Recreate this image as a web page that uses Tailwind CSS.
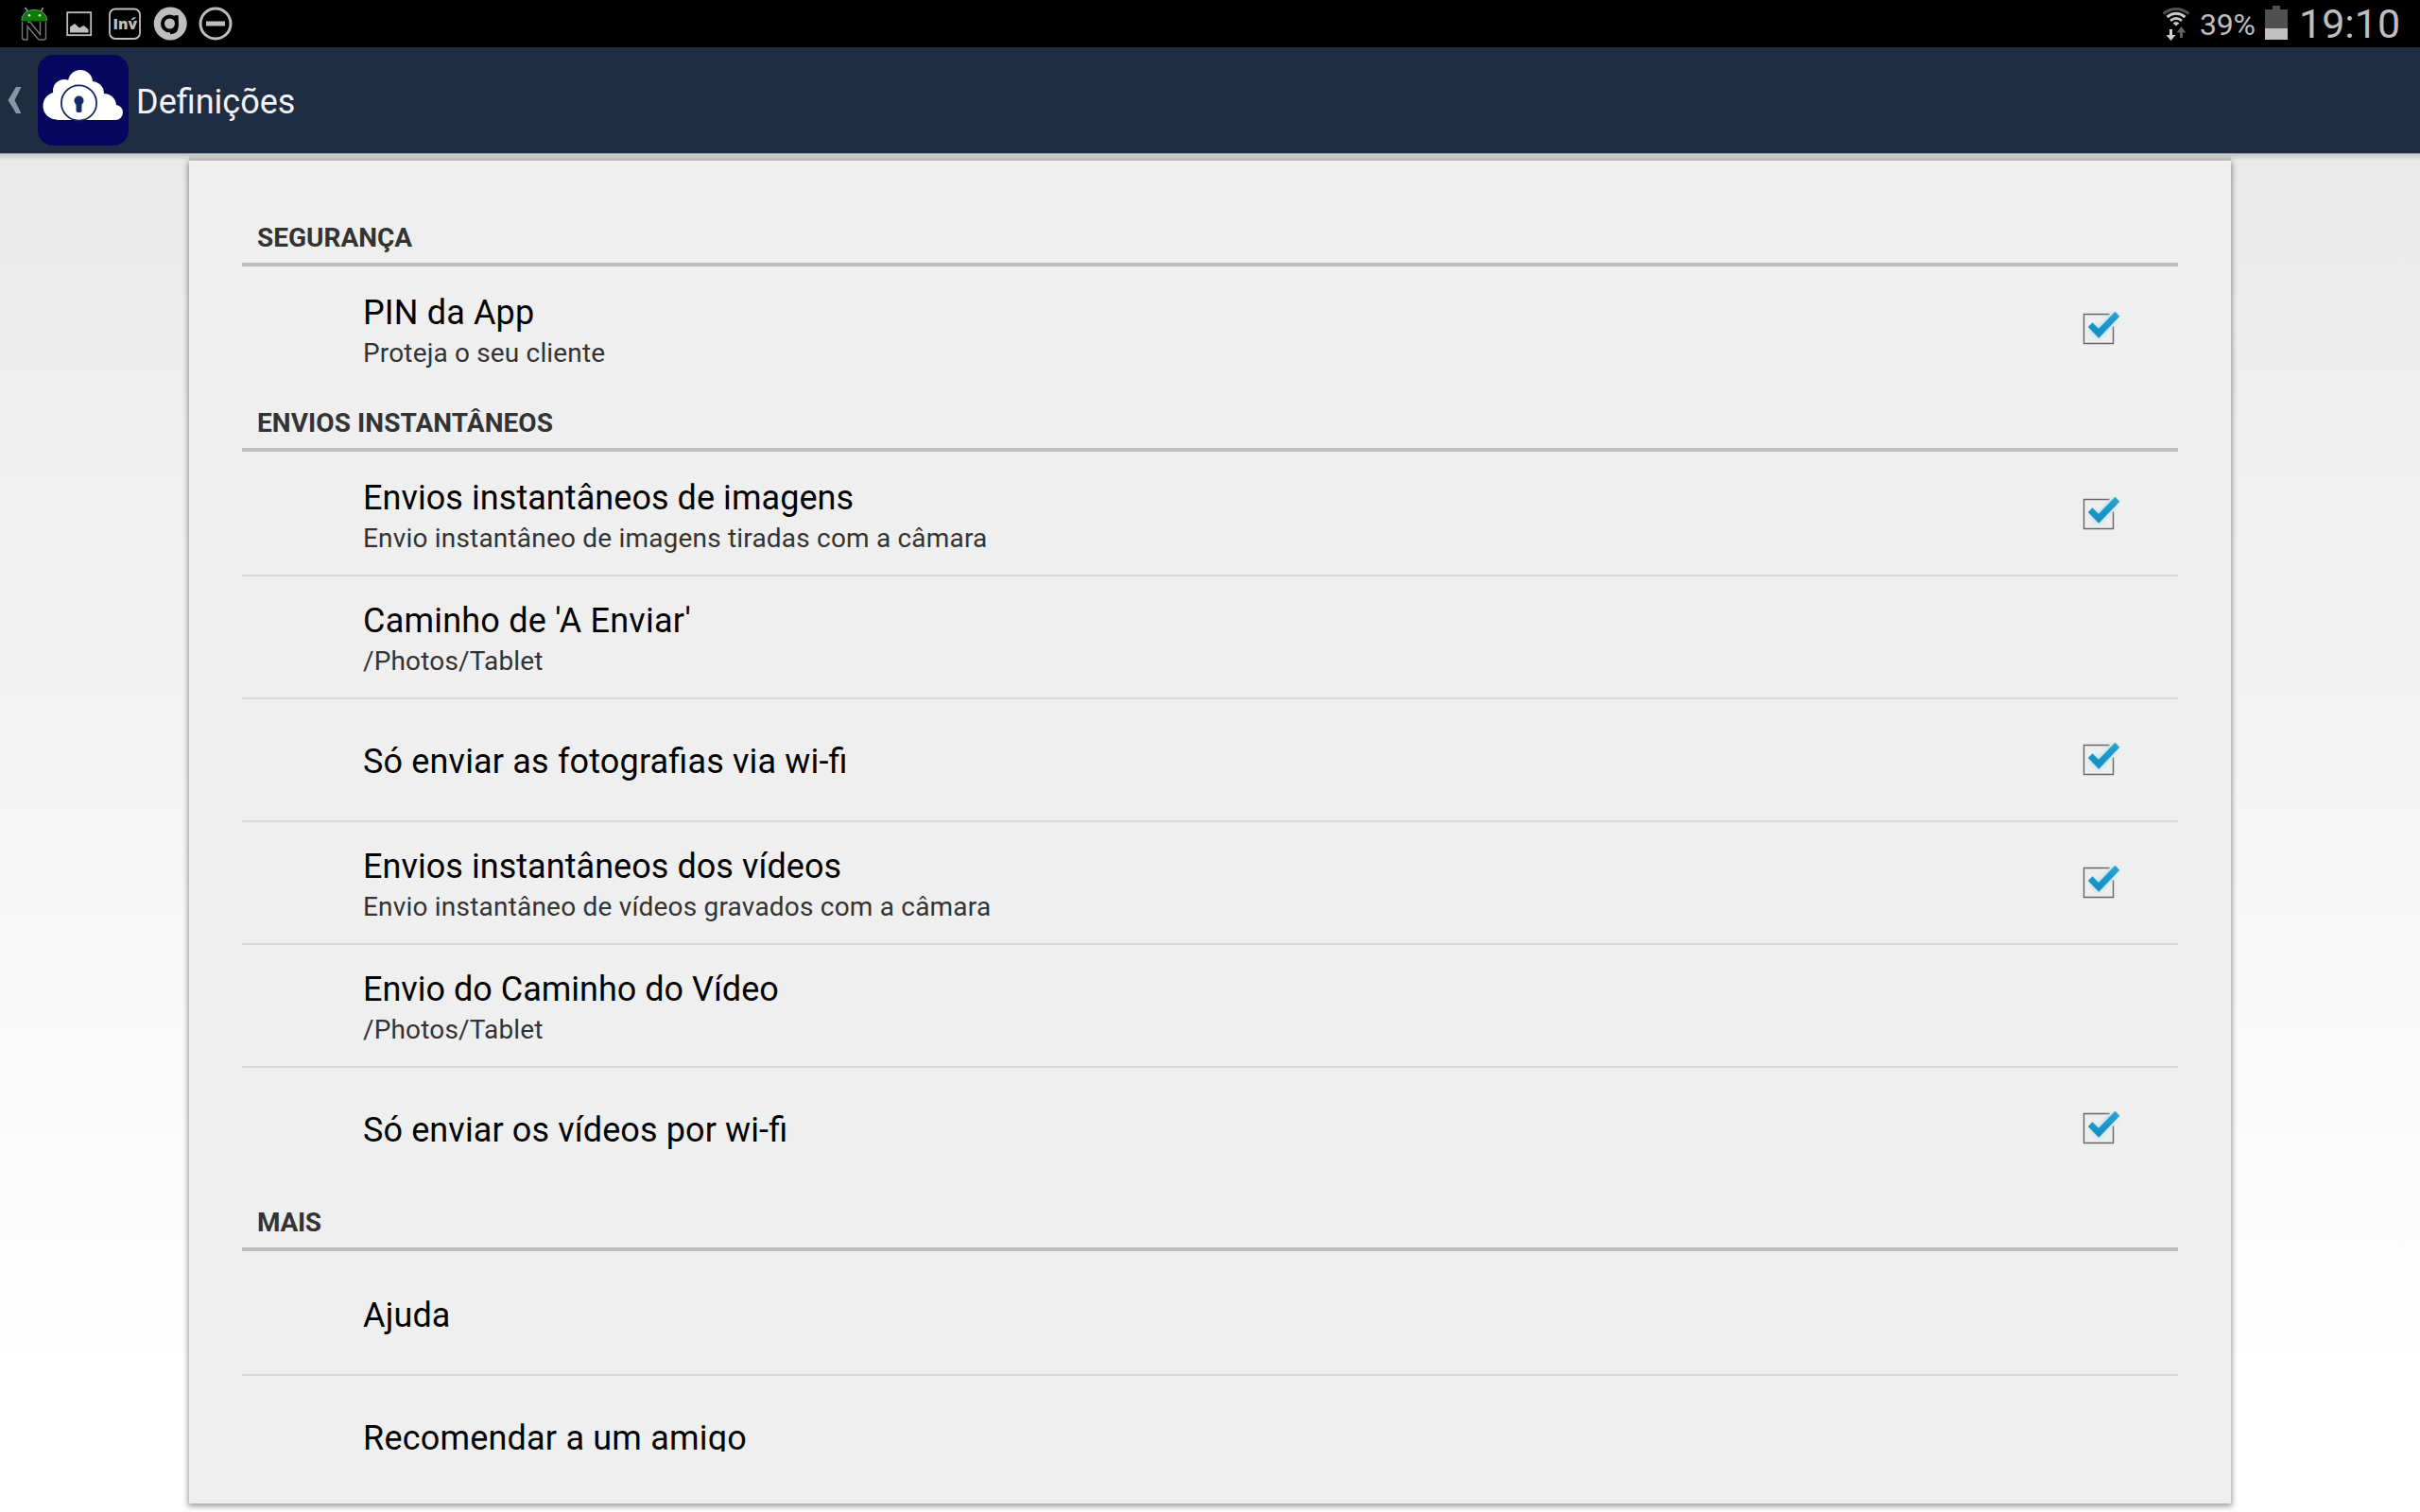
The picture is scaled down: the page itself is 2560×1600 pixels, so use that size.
<!DOCTYPE html>
<html lang="pt">
<head>
<meta charset="utf-8">
<title>Definições</title>
<script src="https://cdn.jsdelivr.net/npm/@tailwindcss/browser@4"></script>
</head>
<body class="h-[1600px] w-[2560px] overflow-hidden bg-white font-['Roboto',sans-serif] flex flex-col">
<svg width="0" height="0" class="absolute">
  <defs>
    <linearGradient id="tick" x1="0" y1="0" x2="0" y2="1"><stop offset="0" stop-color="#2aa3d3"/><stop offset="1" stop-color="#0f8cc4"/></linearGradient>
    <filter id="glow" x="-40%" y="-40%" width="180%" height="180%"><feGaussianBlur stdDeviation="2.4"/></filter>
    <symbol id="check" viewBox="0 0 56 56">
      <path d="M39.500 12.500H12.500V43.500H43.500V25.500" fill="none" stroke="#666" stroke-width="1.400"/>
      <path d="M21 26l7 7L45 14" fill="none" stroke="#a5dcf2" stroke-opacity=".75" stroke-width="9" filter="url(#glow)"/>
      <path d="M21.500 21.500L28 28L45.500 10L50 14.800L28.200 37.500L17 26Z" fill="url(#tick)" stroke="#3a9cc4" stroke-width=".6"/>
    </symbol>
  </defs>
</svg>

<!-- Status bar -->
<div class="h-[50px] shrink-0 bg-black flex items-center justify-between text-[#bebebe]">
  <svg width="260" height="50" viewBox="0 0 260 50">
    <g fill="none" stroke="#777" stroke-width="1.400"><path d="M23.500 23V39.500Q23.500 42 26 42H29V28L40.500 41.500Q41 42 42 42H46Q48.500 42 48.500 40V23M29 23.500H32L42.500 36.500V23"/></g>
    <path d="M23 22.500C23 14 29 10.500 36 10.500S49.500 14 49.500 22.500Z" fill="#0b7a0b"/>
    <path d="M29.500 12L26.500 8M43.500 12L45.500 8" stroke="#8aa88a" stroke-width="1.600" fill="none"/>
    <path d="M23 22C23 14.500 28 10.500 36 10.500S49.500 14.500 49.500 22" fill="none" stroke="#7d967d" stroke-width="1"/>
    <circle cx="31" cy="16.300" r="1.300" fill="#d8e8d8"/><circle cx="42" cy="16.300" r="1.300" fill="#d8e8d8"/>
    <rect x="71.200" y="13.200" width="25" height="24" fill="none" stroke="#bebebe" stroke-width="1.800"/>
    <path d="M74 34.500V28.500L79 25L84 29.500L88.500 27L93.500 31V34.500Z" fill="#bebebe"/>
    <rect x="116" y="9.500" width="32" height="31.500" rx="6" fill="none" stroke="#bebebe" stroke-width="1.800"/>
    <text x="119.500" y="31" font-family="Open Sans" font-weight="800" font-size="16" textLength="25.500" lengthAdjust="spacingAndGlyphs" fill="#bebebe">Inv́</text>
    <circle cx="180.200" cy="25" r="17.500" fill="#bebebe"/>
    <circle cx="179.500" cy="25" r="7.500" fill="none" stroke="#000" stroke-width="4"/>
    <path d="M184.500 18H187V25.500C187 32 186 34 180 34.500" fill="none" stroke="#000" stroke-width="3.500"/>
    <circle cx="228" cy="25" r="16" fill="none" stroke="#bebebe" stroke-width="3"/>
    <rect x="218" y="22.500" width="20" height="5" fill="#bebebe"/>
  </svg>
  <div class="flex h-[50px] items-center pr-[22px]">
    <svg width="32" height="50" viewBox="2286 0 32 50">
      <g fill="none">
        <path d="M2288.500 14.500Q2302 4.500 2315.500 14.500" stroke="#505050" stroke-width="3"/>
        <path d="M2292.500 18Q2302 10.500 2311.500 18" stroke="#c8c8c8" stroke-width="3"/>
        <path d="M2296 21.800Q2302 17 2308 21.800" stroke="#c8c8c8" stroke-width="2.800"/>
      </g>
      <path d="M2298.500 24.500Q2302 21.500 2305.500 24.500L2302 27.500Z" fill="#c8c8c8"/>
      <path d="M2295 31H2298V37H2301.500L2296.500 43L2291.500 37H2295Z" fill="#d0d0d0"/>
      <path d="M2306 40H2309V34.500H2312.500L2307.500 28L2302.500 34.500H2306Z" fill="#606060"/>
    </svg>
    <div class="ml-[9px] w-[59px] text-[32px] leading-[50px] tracking-[-0.2px] whitespace-nowrap pt-[2px]">39%</div>
    <svg class="ml-[10px]" width="24" height="50" viewBox="0 0 24 50"><path d="M8 6H16V10H24V30H0V10H8Z" fill="#505050"/><rect y="30" width="24" height="12" fill="#c0c0c0"/></svg>
    <div class="ml-[12px] w-[106px] text-[43px] leading-[50px] whitespace-nowrap">19:10</div>
  </div>
</div>

<!-- Action bar -->
<header class="relative z-10 h-[112px] shrink-0 bg-[#1f2d43] flex items-center">
  <svg width="40" height="112" viewBox="0 0 40 112" class="shrink-0"><path d="M17 42H22.500L15.500 56L22.500 70H17L8.500 56Z" fill="#8696a8"/></svg>
  <svg width="96" height="96" viewBox="0 0 96 96" class="shrink-0">
    <rect width="96" height="96" rx="16" fill="#06065e"/>
    <g fill="#fff"><circle cx="45" cy="29" r="13"/><circle cx="28" cy="38" r="12"/><circle cx="20" cy="54" r="14.500"/><circle cx="57" cy="41" r="13"/><circle cx="70" cy="54" r="13"/><circle cx="82" cy="61" r="8"/><path d="M20 40H66L82 60V69H20Z"/></g>
    <circle cx="43.500" cy="51" r="18.600" fill="#fff" stroke="#12285e" stroke-width="1.800"/>
    <circle cx="43.500" cy="48.500" r="5" fill="#132c66"/><rect x="40.500" y="49" width="6" height="12" rx="2" fill="#132c66"/>
  </svg>
  <h1 class="ml-[8px] text-[36px] leading-[42px] pt-[4px] text-[#f3f3f3]">Definições</h1>
</header>

<main class="relative flex-1 min-h-0 bg-linear-to-b from-[#eaeaea] to-white to-90% pt-[8px] px-[200px]">
  <div class="absolute inset-x-0 top-0 h-[8px] bg-linear-to-b from-[#c3c9c8] to-transparent border-t border-[#93a0ae]"></div>
  <div class="absolute left-[200px] right-[200px] top-[1px] h-[8px] bg-[#c9ccc8]"></div>
  <div class="relative h-[1421px] bg-[#efefef] px-14 pt-12 border-t border-t-[#f8f8f8] shadow-[0_2px_6px_1px_rgba(0,0,0,0.4)]">
    <div id="list" class="h-[1320px] overflow-hidden -mt-[3px]"></div>
  </div>
</main>

<script>
// Each row: title, summary, checked, title tracking, summary tracking
const sections = [
  ["SEGURANÇA", 0, [["PIN da App", "Proteja o seu cliente", 1, .15, .16]]],
  ["ENVIOS INSTANTÂNEOS", .08, [
    ["Envios instantâneos de imagens", "Envio instantâneo de imagens tiradas com a câmara", 1, .06, .19],
    ["Caminho de 'A Enviar'", "/Photos/Tablet", 0, .22, .16],
    ["Só enviar as fotografias via wi-fi", "", 1, .16, 0],
    ["Envios instantâneos dos vídeos", "Envio instantâneo de vídeos gravados com a câmara", 1, .05, .2],
    ["Envio do Caminho do Vídeo", "/Photos/Tablet", 0, 0, .16],
    ["Só enviar os vídeos por wi-fi", "", 1, .11, 0]]],
  ["MAIS", -.3, [["Ajuda", "", 0, .15, 0], ["Recomendar a um amigo", "", 0, .2, 0]]]
];
document.getElementById("list").innerHTML = sections.map(([name, hs, rows]) =>
  `<section>
    <h2 class="h-[66px] border-b-4 border-[#bdbdbd] pl-4 pt-[19px] text-[28px] leading-[33px] font-bold text-[#333]" style="letter-spacing:${hs}px">${name}</h2>` +
  rows.map(([t, s, c, ts, ss], i) =>
    `<div class="h-[130px] border-t-2 ${i ? "border-[#d8d8d8]" : "border-transparent"} pl-32 pr-14 flex items-center justify-between">
      <div class="${s ? "pt-[5px]" : "pt-[4px]"}"><div class="text-[36px] leading-[42px] text-black whitespace-nowrap [font-feature-settings:'liga'_1]" style="letter-spacing:${ts}px">${t}</div>` +
      (s ? `<div class="text-[28px] leading-[34px] pt-[5px] text-[#333] whitespace-nowrap" style="letter-spacing:${ss}px">${s}</div>` : "") +
    `</div>` + (c ? `<svg width="56" height="56"><use href="#check"/></svg>` : "") + `</div>`).join("") +
  `</section>`).join("");
</script>
</body>
</html>
